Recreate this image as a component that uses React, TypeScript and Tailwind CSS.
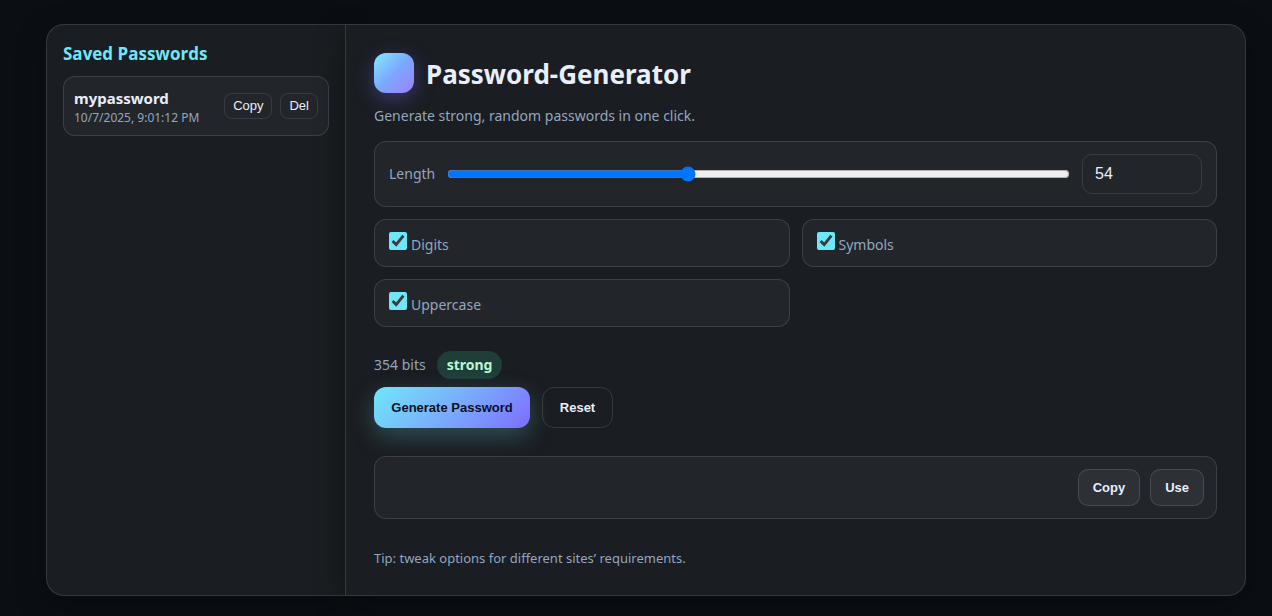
import { useState } from "react";

const panel =
  "border-[#ffffff1f] bg-[#1a1d21] shadow-[0_10px_30px_rgba(0,0,0,0.35)]";
const card = "rounded-xl border border-[#ffffff1f] bg-[#22252a]";

function SmallButton({ children }: { children: string }) {
  return (
    <button
      type="button"
      className="rounded-lg border border-[#ffffff1a] px-2 py-1 font-['Liberation_Sans',sans-serif] text-[13px] leading-4 text-[#e8eefc]"
    >
      {children}
    </button>
  );
}

function OutputButton({ children }: { children: string }) {
  return (
    <button
      type="button"
      className="rounded-[10px] border border-[#ffffff1f] bg-[#2d3035] px-3.5 py-2.5 font-['Liberation_Sans',sans-serif] text-[13px] leading-[15px] font-bold text-[#e8eefc]"
    >
      {children}
    </button>
  );
}

function Option({ id, label }: { id: string; label: string }) {
  const [checked, setChecked] = useState(true);
  return (
    <div className={`${card} h-12 px-3.5 py-3`}>
      <label htmlFor={id} className="flex items-start gap-1 text-sm leading-[26px] text-[#94a6bf]">
        <input
          id={id}
          type="checkbox"
          checked={checked}
          onChange={(e) => setChecked(e.target.checked)}
          className="size-[18px] accent-[#6ee7f9]"
        />
        {label}
      </label>
    </div>
  );
}

export default function App() {
  const [length, setLength] = useState(54);
  return (
    <div className="min-h-screen bg-[#0b0f14] pt-6 pr-[26px] pb-5 pl-[46px] font-['Noto_Sans','Open_Sans',sans-serif] text-[#e8eefc]">
      <div className="mx-auto flex max-w-[1200px]">
        <aside className={`${panel} w-[299px] shrink-0 rounded-l-[18px] border border-r-0 p-4`}>
          <h2 className="font-['Open_Sans','Noto_Sans',sans-serif] text-[17px] leading-[25px] font-bold text-[#6ee7f9]">
            Saved Passwords
          </h2>
          <ul className="mt-2.5">
            <li className={`${card} flex h-15 items-center justify-between rounded-[10px] px-2.5`}>
              <div className="pt-1">
                <div className="text-[15px] leading-5 font-bold">mypassword</div>
                <div className="text-xs leading-5 text-[#94a6bf]">10/7/2025, 9:01:12 PM</div>
              </div>
              <div className="flex gap-2">
                <SmallButton>Copy</SmallButton>
                <SmallButton>Del</SmallButton>
              </div>
            </li>
          </ul>
        </aside>

        <main className={`${panel} min-w-0 flex-1 rounded-r-[18px] border p-7`}>
          <header className="flex h-10 items-center gap-3">
            <div className="size-10 rounded-xl bg-linear-135 from-[#86e9fb] via-[#7aa8ff] to-[#9a80fb] shadow-[0_6px_20px_rgba(124,108,255,0.35)]" />
            <h1 className="pt-0.5 text-[26px] leading-10 font-bold">Password-Generator</h1>
          </header>
          <p className="mt-[11px] text-sm leading-6 text-[#94a6bf]">
            Generate strong, random passwords in one click.
          </p>

          <div className={`${card} mt-[13px] flex items-center gap-3 px-3.5 py-3`}>
            <label htmlFor="length" className="text-sm leading-[26px] text-[#94a6bf]">
              Length
            </label>
            <input
              id="length"
              type="range"
              min={8}
              max={128}
              value={length}
              onChange={(e) => setLength(Number(e.target.value))}
              className="h-4 min-w-0 flex-1"
            />
            <input
              type="number"
              aria-label="Password length"
              min={8}
              max={128}
              value={length}
              onChange={(e) => setLength(Number(e.target.value))}
              className="h-10 w-30 rounded-[10px] border border-[#ffffff1a] bg-transparent px-3 font-['Liberation_Sans',sans-serif] text-base"
            />
          </div>

          <div className="mt-3 grid grid-cols-2 gap-3">
            <Option id="digits" label="Digits" />
            <Option id="symbols" label="Symbols" />
            <Option id="uppercase" label="Uppercase" />
          </div>

          <div className="mt-6 flex items-center gap-[11px]">
            <span className="text-sm leading-7 text-[#94a6bf]">354 bits</span>
            <span className="rounded-full bg-[#203e38] px-2.5 text-sm leading-7 font-bold text-[#bbf7d0]">
              strong
            </span>
          </div>

          <div className="mt-2 flex gap-3 font-['Liberation_Sans',sans-serif] text-[13px] leading-[17px] font-bold">
            <button
              type="button"
              className="w-39 rounded-xl bg-linear-135 from-[#6ee7f9] to-[#7c6cff] py-3 text-[#0b1220] shadow-[0_8px_24px_rgba(110,231,249,0.25)]"
            >
              Generate Password
            </button>
            <button type="button" className="w-[71px] rounded-xl border border-[#ffffff1f]">
              Reset
            </button>
          </div>

          <div className={`${card} mt-7 flex items-center gap-2.5 p-3`}>
            <output className="min-w-0 flex-1" />
            <OutputButton>Copy</OutputButton>
            <OutputButton>Use</OutputButton>
          </div>

          <p className="mt-[30px] text-[13px] leading-[18px] text-[#94a6bf]">
            Tip: tweak options for different sites’ requirements.
          </p>
        </main>
      </div>
    </div>
  );
}
